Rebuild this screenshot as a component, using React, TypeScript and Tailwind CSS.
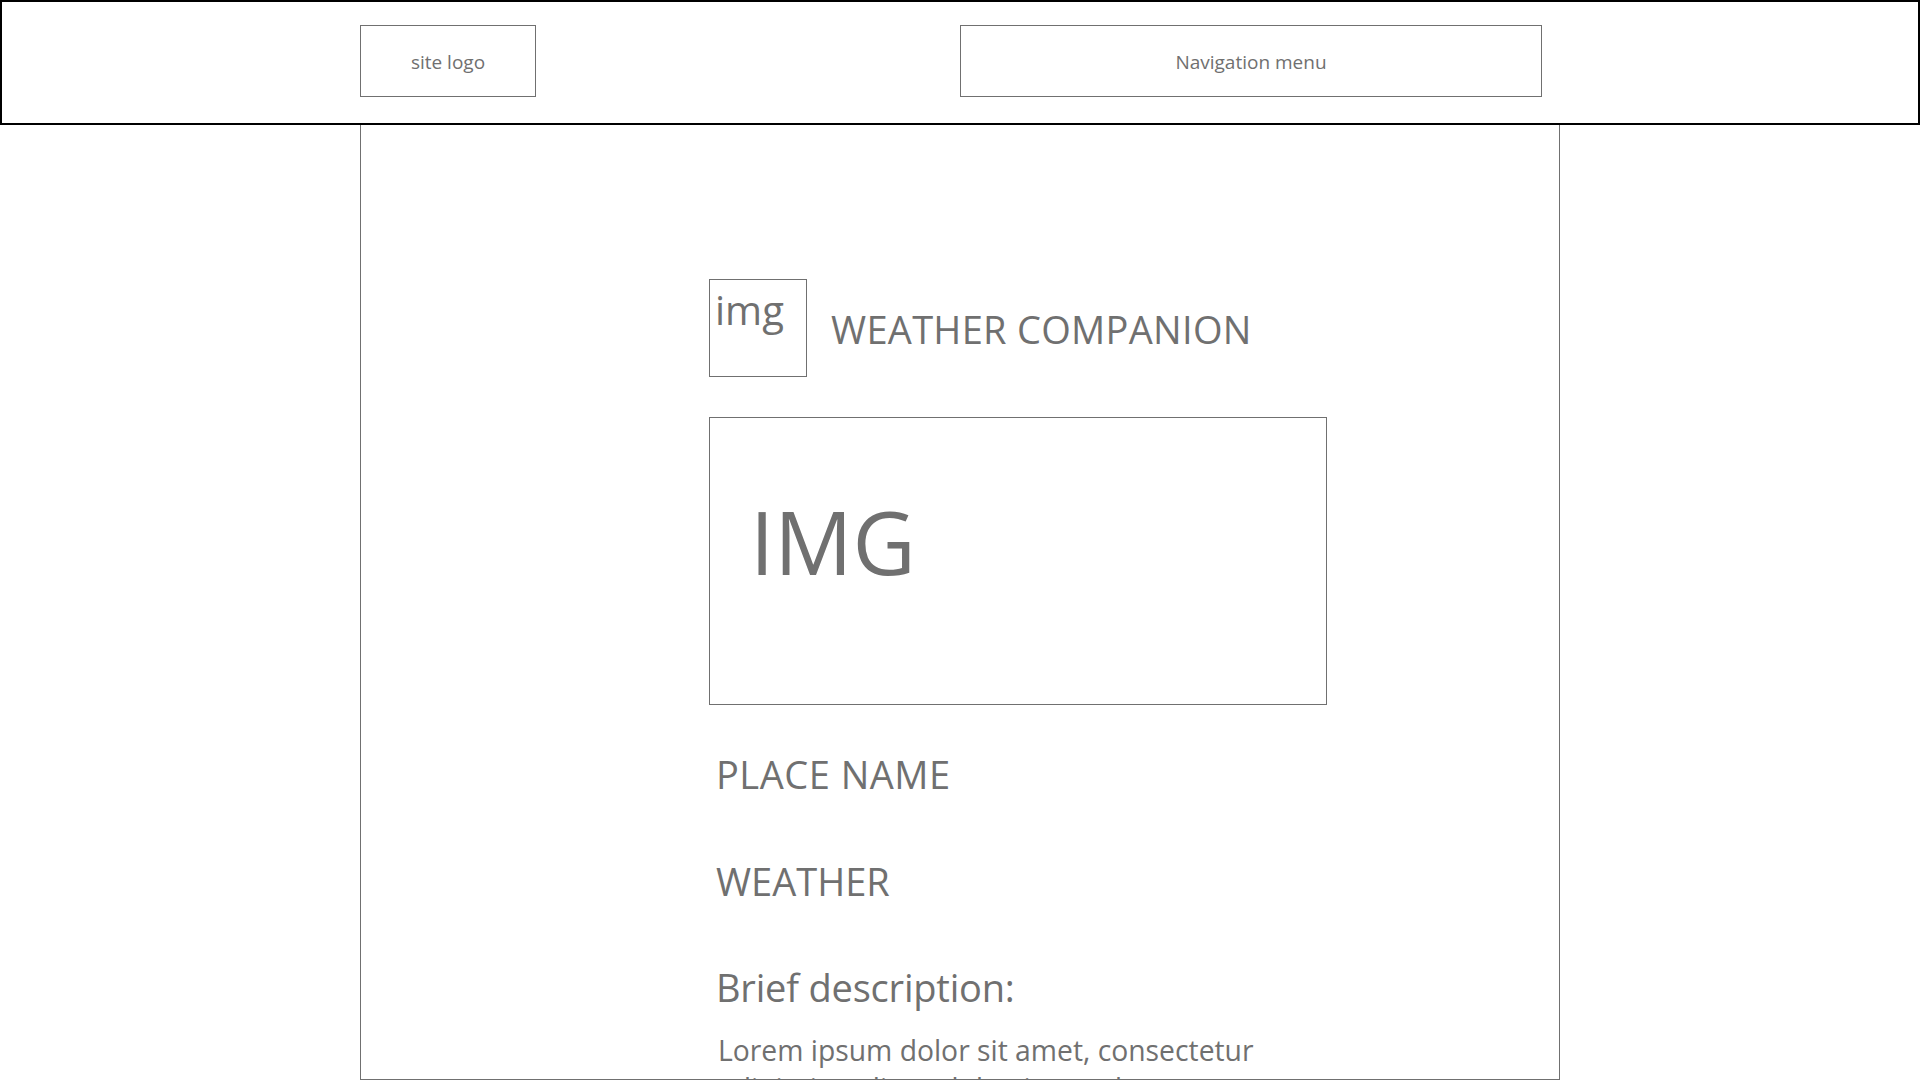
export default function App() {
  return (
    <div className="h-[1080px] w-[1920px] overflow-hidden bg-white font-['Open_Sans',sans-serif] text-[#707070]">
      {/* Header */}
      <header className="flex h-[125px] items-start border-2 border-black pt-[23px]">
        <div className="ml-[358px] flex h-[72px] w-[176px] items-center justify-center border border-[#707070] pt-[2px] text-[19px]">
          site logo
        </div>
        <nav className="ml-[424px] flex h-[72px] w-[582px] items-center justify-center border border-[#707070] pt-[2px] text-[19px]">
          Navigation menu
        </nav>
      </header>

      {/* Main card */}
      <main className="ml-[360px] h-[955px] w-[1200px] border border-t-0 border-[#707070] pl-[348px] pt-[154px]">
        <div className="flex items-center gap-[24px]">
          <div className="h-[98px] w-[98px] border border-[#707070] px-[5px] pt-[6px] text-[40px] leading-[48px]">img</div>
          <h1 className="pt-[2px] text-[38px] leading-none tracking-[0.3px]">WEATHER COMPANION</h1>
        </div>

        <div className="mt-[40px] flex h-[288px] w-[618px] items-start border border-[#707070] pl-[40px] pt-[73px]">
          <span className="text-[87px] leading-[100px]">IMG</span>
        </div>

        <div className="pl-[7px]">
          <h2 className="mt-[43px] text-[38px] leading-[52px] tracking-[0.5px]">PLACE NAME</h2>
          <h2 className="mt-[55px] text-[38px] leading-[52px]">WEATHER</h2>
          <h2 className="mt-[54px] text-[38px] leading-[52px] tracking-[-0.2px]">Brief description:</h2>
          <p className="ml-[2px] mt-[18px] w-[570px] text-[28.3px] leading-[38px]">
            Lorem ipsum dolor sit amet, consectetur adipiscing elit, sed do eiusmod tempor incididunt ut labore et dolore magna aliqua.
          </p>
        </div>
      </main>
    </div>
  );
}
